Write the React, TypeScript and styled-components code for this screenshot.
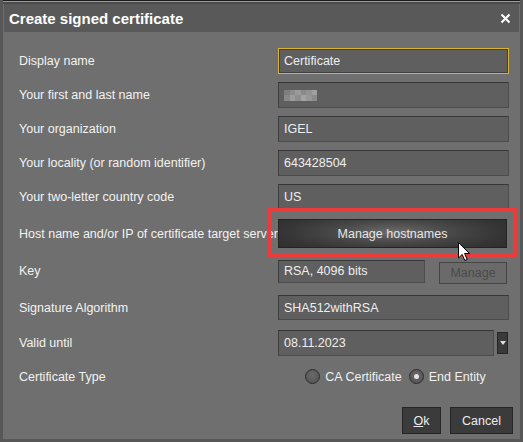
import React from "react";
import styled, { createGlobalStyle } from "styled-components";

const Global = createGlobalStyle`
  html, body { margin: 0; padding: 0; background: #6f6f6f; }
  body { font-family: "Liberation Sans", Arial, sans-serif; }
  * { box-sizing: border-box; }
`;

const Window = styled.div`
  width: 523px;
  height: 442px;
  background: #6f6f6f;
  border-left: 3px solid #575757;
  border-right: 3px solid #575757;
  border-bottom: 3px solid #575757;
  display: flex;
  flex-direction: column;
  position: relative;
  overflow: hidden;
`;

const TopEdge = styled.div`
  height: 4px;
  margin: 0 -3px;
  background: linear-gradient(#1c1c1c 0 1px, #9a9a9a 1px 2px, #4c4c4c 2px 4px);
`;

const TitleBar = styled.div`
  height: 28px;
  margin: 0 1px;
  background: #595959;
  display: flex;
  align-items: center;
  justify-content: space-between;
  padding: 0 8px 0 5px;
`;

const Title = styled.div`
  color: #ffffff;
  font-weight: bold;
  font-size: 15px;
  letter-spacing: 0;
`;

const Close = styled.div`
  width: 12px;
  height: 12px;
  display: flex;
  align-items: center;
  justify-content: center;
`;

const Body = styled.div`
  flex: 1;
  padding: 12px 0 0 16px;
  display: flex;
  flex-direction: column;
`;

const Row = styled.div<{ $h: number }>`
  height: ${(p) => p.$h}px;
  display: grid;
  grid-template-columns: 259px 231px;
  align-items: center;
`;

const Label = styled.div`
  color: #f2f2f2;
  font-size: 12.5px;
  white-space: nowrap;
  overflow: hidden;
`;

const Input = styled.div<{ $focus?: boolean; $w?: number; $hgt?: number }>`
  width: ${(p) => (p.$w ? `${p.$w}px` : "100%")};
  height: ${(p) => p.$hgt ?? 26}px;
  background: #5f5f5f;
  border: 1px solid #4c4c4c;
  border-top-color: #363636;
  border-left-color: #3e3e3e;
  ${(p) =>
    p.$focus
      ? `border: 1px solid #d8b432; box-shadow: inset 0 0 0 1px #3f3f3f;`
      : ``}
  color: #eeeeee;
  font-size: 12.5px;
  display: flex;
  align-items: center;
  padding-left: 5px;
  white-space: nowrap;
`;

const Blurred = styled.div`
  display: grid;
  grid-template-columns: repeat(6, 5.5px);
  grid-template-rows: repeat(2, 5.5px);
`;

const Cell = styled.div<{ $c: string }>`
  background: ${(p) => p.$c};
`;

const HostWrap = styled.div`
  position: relative;
  height: 29px;
`;

const HostButton = styled.div`
  height: 29px;
  width: 229px;
  border: 1px solid #242424;
  background: radial-gradient(ellipse 60% 90% at 50% 45%, #6b6b6b 0%, #474747 45%, #353535 80%, #303030 100%);
  color: #e6e6e6;
  font-size: 12.5px;
  display: flex;
  align-items: center;
  justify-content: center;
`;

const Highlight = styled.div`
  position: absolute;
  left: -11px;
  top: -11px;
  width: 250px;
  height: 50px;
  border: 4px solid #ec3b3b;
  pointer-events: none;
`;

const Cursor = styled.svg`
  position: absolute;
  left: 180px;
  top: 23px;
`;

const KeyField = styled.div`
  display: flex;
  align-items: center;
  gap: 14px;
`;

const DisabledButton = styled.div`
  width: 68px;
  height: 22px;
  margin-top: 3px;
  border: 1px solid #454545;
  background: #6a6a6a;
  color: #4a4a4a;
  font-size: 12.5px;
  display: flex;
  align-items: center;
  justify-content: center;
`;

const DateField = styled.div`
  display: flex;
  align-items: center;
  gap: 3px;
`;

const DropButton = styled.div`
  width: 11px;
  height: 22px;
  background: #3a3a3a;
  border: 1px solid #262626;
  display: flex;
  align-items: center;
  justify-content: center;
`;

const Triangle = styled.div`
  width: 0;
  height: 0;
  border-left: 3.5px solid transparent;
  border-right: 3.5px solid transparent;
  border-top: 4px solid #e0e0e0;
`;

const RadioGroup = styled.div`
  display: flex;
  justify-content: center;
  align-items: center;
  gap: 7px;
  padding-left: 4px;
`;

const RadioItem = styled.label`
  display: flex;
  align-items: center;
  gap: 5px;
  color: #f0f0f0;
  font-size: 12.5px;
`;

const RadioCircle = styled.span<{ $on?: boolean }>`
  width: 15px;
  height: 15px;
  border-radius: 50%;
  border: 1px solid #2c2c2c;
  background: radial-gradient(circle at 50% 40%, #6a6a6a, #505050);
  display: flex;
  align-items: center;
  justify-content: center;
  &::after {
    content: "";
    width: 5px;
    height: 5px;
    border-radius: 50%;
    background: ${(p) => (p.$on ? "#e4e4e4" : "transparent")};
  }
`;

const Footer = styled.div`
  display: flex;
  justify-content: flex-end;
  gap: 9px;
  padding: 13px 7px 0 0;
`;

const Button = styled.div<{ $w: number }>`
  width: ${(p) => p.$w}px;
  height: 27px;
  background: #3b3b3b;
  border: 1px solid #252525;
  color: #ececec;
  font-size: 12.5px;
  display: flex;
  align-items: center;
  justify-content: center;
  u { text-decoration: underline; }
`;

const blur = [
  "#7e7e7e", "#8c8c8c", "#9a9a9a", "#8a8a8a", "#939393", "#a0a0a0",
  "#888888", "#9c9c9c", "#8e8e8e", "#a3a3a3", "#979797", "#8b8b8b",
];

export default function App() {
  return (
    <>
      <Global />
      <Window>
        <TopEdge />
        <TitleBar>
          <Title>Create signed certificate</Title>
          <Close>
            <svg width="11" height="11" viewBox="0 0 11 11">
              <path d="M1.5 1.5 L9.5 9.5 M9.5 1.5 L1.5 9.5" stroke="#ffffff" strokeWidth="2" />
            </svg>
          </Close>
        </TitleBar>
        <Body>
          <Row $h={34}>
            <Label>Display name</Label>
            <Input $focus>Certificate</Input>
          </Row>
          <Row $h={34}>
            <Label>Your first and last name</Label>
            <Input>
              <Blurred>
                {blur.map((c, i) => (
                  <Cell key={i} $c={c} />
                ))}
              </Blurred>
            </Input>
          </Row>
          <Row $h={34}>
            <Label>Your organization</Label>
            <Input>IGEL</Input>
          </Row>
          <Row $h={34}>
            <Label>Your locality (or random identifier)</Label>
            <Input>643428504</Input>
          </Row>
          <Row $h={34}>
            <Label>Your two-letter country code</Label>
            <Input>US</Input>
          </Row>
          <Row $h={39}>
            <Label>Host name and/or IP of certificate target server</Label>
            <HostWrap>
              <HostButton>Manage hostnames</HostButton>
              <Highlight />
              <Cursor width="13" height="20" viewBox="0 0 13 20">
                <path
                  d="M0.5 0.5 L0.5 16 L4.2 12.4 L6.8 18.5 L9.2 17.5 L6.6 11.5 L11.5 11.5 Z"
                  fill="#ffffff"
                  stroke="#000000"
                  strokeWidth="1"
                />
              </Cursor>
            </HostWrap>
          </Row>
          <Row $h={36}>
            <Label>Key</Label>
            <KeyField>
              <Input $w={147} $hgt={23}>RSA, 4096 bits</Input>
              <DisabledButton>Manage</DisabledButton>
            </KeyField>
          </Row>
          <Row $h={37}>
            <Label>Signature Algorithm</Label>
            <Input $hgt={25}>SHA512withRSA</Input>
          </Row>
          <Row $h={33}>
            <Label>Valid until</Label>
            <DateField>
              <Input $w={216}>08.11.2023</Input>
              <DropButton>
                <Triangle />
              </DropButton>
            </DateField>
          </Row>
          <Row $h={35}>
            <Label>Certificate Type</Label>
            <RadioGroup>
              <RadioItem>
                <RadioCircle />
                CA Certificate
              </RadioItem>
              <RadioItem>
                <RadioCircle $on />
                End Entity
              </RadioItem>
            </RadioGroup>
          </Row>
          <Footer>
            <Button $w={39}>
              <u>O</u>k
            </Button>
            <Button $w={63}>Cancel</Button>
          </Footer>
        </Body>
      </Window>
    </>
  );
}
